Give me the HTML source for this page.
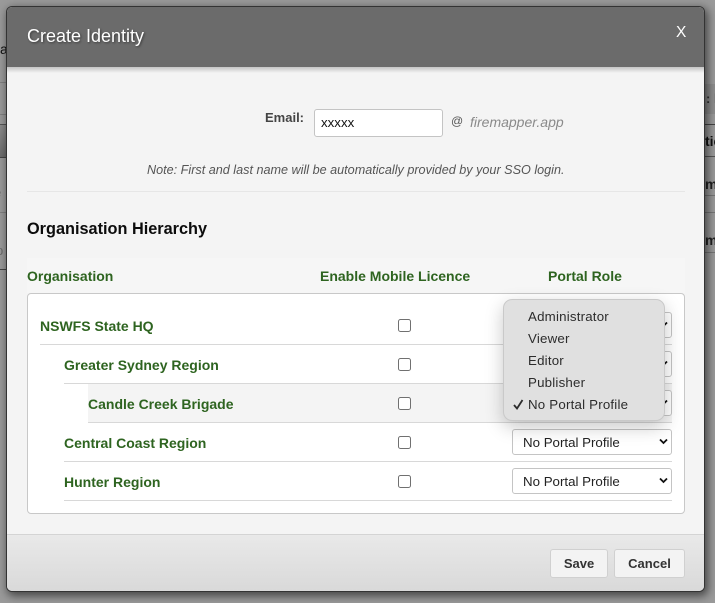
<!DOCTYPE html>
<html><head><meta charset="utf-8">
<style>
html,body{margin:0;padding:0}
body{width:715px;height:603px;overflow:hidden;position:relative;background:#9a9a9a;font-family:"Liberation Sans",sans-serif}
.a{position:absolute;white-space:nowrap}
.l{position:absolute;height:1px}
#modal{position:absolute;left:7px;top:7px;width:697px;height:584px;background:#f4f4f4;border-radius:5px;box-shadow:0 0 0 1px #333,2px 3px 9px 2px rgba(0,0,0,.55);overflow:hidden}
.g{font-weight:bold;color:#2e6420;font-size:14px;line-height:16px}
.cb{position:absolute;left:398px;width:11px;height:11px;border:1px solid #707070;border-radius:2.5px;background:#fff}
.sel{position:absolute;left:512px;width:158px;height:24px;background:#fff;border:1px solid #c4c4c4;border-radius:3px;font-size:13.3px;line-height:26px;color:#222;text-indent:10px}
.sel svg{position:absolute;left:146px;top:8px}
.m{position:absolute;left:528px;font-size:13.3px;line-height:16px;color:#2c2c2c;letter-spacing:.2px;white-space:nowrap}
</style></head>
<body>
<div class="a" style="left:0;top:41px;font-size:14px;color:#111">a</div>
<div class="l" style="left:0;top:82px;width:7px;background:#808080"></div>
<div class="l" style="left:0;top:114px;width:7px;background:#808080"></div>
<div style="position:absolute;left:0;top:124px;width:7px;height:32px;background:linear-gradient(#8c8c8c,#6c6c6c);border-top:1px solid #555;border-bottom:1px solid #444"></div>
<div class="a" style="left:-6px;top:185px;font-size:13px;color:#6a6a6a">e</div>
<div class="l" style="left:0;top:212px;width:7px;background:#808080"></div>
<div class="a" style="left:-4px;top:243px;font-size:13px;color:#6a6a6a">p</div>
<div class="l" style="left:0;top:269px;width:7px;background:#444"></div>
<div style="position:absolute;left:705px;top:84px;width:10px;height:30px;background:#8e8e8e"></div>
<div class="a" style="left:706px;top:91px;font-size:13px;color:#333;font-weight:bold">: l</div>
<div class="l" style="left:705px;top:124px;width:10px;background:#444"></div>
<div class="a" style="left:705px;top:133px;font-size:14px;font-weight:bold;color:#111">tic</div>
<div class="l" style="left:705px;top:156px;width:10px;background:#555"></div>
<div class="a" style="left:705px;top:176px;font-size:14px;font-weight:bold;color:#222">m-</div>
<div class="l" style="left:705px;top:195px;width:10px;background:#777"></div>
<div class="l" style="left:705px;top:212px;width:10px;background:#777"></div>
<div class="a" style="left:705px;top:232px;font-size:14px;font-weight:bold;color:#222">m-</div>
<div class="l" style="left:705px;top:252px;width:10px;background:#777"></div>

<div id="modal"></div>
<div style="position:absolute;left:7px;top:7px;width:697px;height:60px;background:#6b6b6b;border-radius:5px 5px 0 0"></div>
<div style="position:absolute;left:7px;top:67px;width:697px;height:6px;background:linear-gradient(#c4c4c4,#f4f4f4)"></div>
<div class="a" style="left:27px;top:25px;font-size:18px;line-height:22px;color:#fff;text-shadow:1px 1px 2px rgba(0,0,0,.45)">Create Identity</div>
<div class="a" style="left:676px;top:24px;font-size:15.5px;line-height:18px;color:#fff">X</div>

<div class="a" style="left:265px;top:110px;font-size:13px;line-height:16px;font-weight:bold;color:#444">Email:</div>
<div style="position:absolute;left:314px;top:109px;width:127px;height:26px;background:#fff;border:1px solid #c4c4c4;border-radius:3px"></div>
<div class="a" style="left:321px;top:115px;font-size:13.3px;line-height:16px;color:#111">xxxxx</div>
<div class="a" style="left:451px;top:114px;font-size:12px;line-height:15px;color:#555">@</div>
<div class="a" style="left:470px;top:114px;font-size:14px;line-height:16px;font-style:italic;color:#8a8a8a">firemapper.app</div>
<div class="a" style="left:147px;top:162px;font-size:12.63px;line-height:16px;font-style:italic;color:#555">Note: First and last name will be automatically provided by your SSO login.</div>
<div class="l" style="left:27px;top:191px;width:658px;background:#e6e6e6"></div>

<div class="a" style="left:27px;top:219px;font-size:16.3px;line-height:20px;font-weight:bold;color:#0c0c0c">Organisation Hierarchy</div>
<div style="position:absolute;left:27px;top:258px;width:658px;height:35px;background:#f6f6f6"></div>
<div class="a g" style="left:27px;top:268px">Organisation</div>
<div class="a g" style="left:320px;top:268px">Enable Mobile Licence</div>
<div class="a g" style="left:548px;top:268px">Portal Role</div>

<div style="position:absolute;left:27px;top:293px;width:656px;height:219px;background:#fff;border:1px solid #c8c8c8;border-radius:4px"></div>
<div style="position:absolute;left:88px;top:384px;width:584px;height:38px;background:#f4f4f4"></div>
<div class="l" style="left:40px;top:344px;width:632px;background:#d8d8d8"></div>
<div class="l" style="left:64px;top:383px;width:608px;background:#d8d8d8"></div>
<div class="l" style="left:88px;top:422px;width:584px;background:#d8d8d8"></div>
<div class="l" style="left:64px;top:461px;width:608px;background:#d8d8d8"></div>
<div class="l" style="left:64px;top:500px;width:608px;background:#d8d8d8"></div>

<div class="a g" style="left:40px;top:318px">NSWFS State HQ</div>
<div class="a g" style="left:64px;top:357px">Greater Sydney Region</div>
<div class="a g" style="left:88px;top:396px">Candle Creek Brigade</div>
<div class="a g" style="left:64px;top:435px">Central Coast Region</div>
<div class="a g" style="left:64px;top:474px">Hunter Region</div>

<div class="cb" style="top:319px"></div>
<div class="cb" style="top:358px"></div>
<div class="cb" style="top:397px"></div>
<div class="cb" style="top:436px"></div>
<div class="cb" style="top:475px"></div>

<div class="sel" style="top:312px"><svg width="9" height="7" viewBox="0 0 9 7"><path d="M1 1.5 L4.5 5 L8 1.5" fill="none" stroke="#111" stroke-width="1.8"/></svg></div>
<div class="sel" style="top:351px"><svg width="9" height="7" viewBox="0 0 9 7"><path d="M1 1.5 L4.5 5 L8 1.5" fill="none" stroke="#111" stroke-width="1.8"/></svg></div>
<div class="sel" style="top:390px"><svg width="9" height="7" viewBox="0 0 9 7"><path d="M1 1.5 L4.5 5 L8 1.5" fill="none" stroke="#111" stroke-width="1.8"/></svg></div>
<div class="sel" style="top:429px">No Portal Profile<svg width="9" height="7" viewBox="0 0 9 7"><path d="M1 1.5 L4.5 5 L8 1.5" fill="none" stroke="#111" stroke-width="1.8"/></svg></div>
<div class="sel" style="top:468px">No Portal Profile<svg width="9" height="7" viewBox="0 0 9 7"><path d="M1 1.5 L4.5 5 L8 1.5" fill="none" stroke="#111" stroke-width="1.8"/></svg></div>

<div style="position:absolute;left:503px;top:299px;width:160px;height:120px;background:#e0e0e0;border:1px solid #c9c9c9;border-radius:9px;box-shadow:0 6px 18px rgba(0,0,0,.22)"></div>
<div class="m" style="top:309px">Administrator</div>
<div class="m" style="top:331px">Viewer</div>
<div class="m" style="top:353px">Editor</div>
<div class="m" style="top:375px">Publisher</div>
<div class="m" style="top:397px">No Portal Profile</div>
<svg style="position:absolute;left:513px;top:399px" width="11" height="11" viewBox="0 0 11 11"><path d="M1 6 L4 9.5 L9.5 1" fill="none" stroke="#2c2c2c" stroke-width="1.8"/></svg>

<div style="position:absolute;left:7px;top:534px;width:697px;height:57px;background:linear-gradient(#e9e9e9,#d9d9d9);border-top:1px solid #d4d4d4;border-radius:0 0 5px 5px;box-sizing:border-box"></div>
<div class="a" style="left:550px;top:549px;width:56px;height:27px;background:#f3f3f3;border:1px solid #d0d0d0;border-radius:3px;text-align:center;font-size:13px;line-height:27px;font-weight:bold;color:#333">Save</div>
<div class="a" style="left:614px;top:549px;width:69px;height:27px;background:#f3f3f3;border:1px solid #d0d0d0;border-radius:3px;text-align:center;font-size:13px;line-height:27px;font-weight:bold;color:#333">Cancel</div>
</body></html>
